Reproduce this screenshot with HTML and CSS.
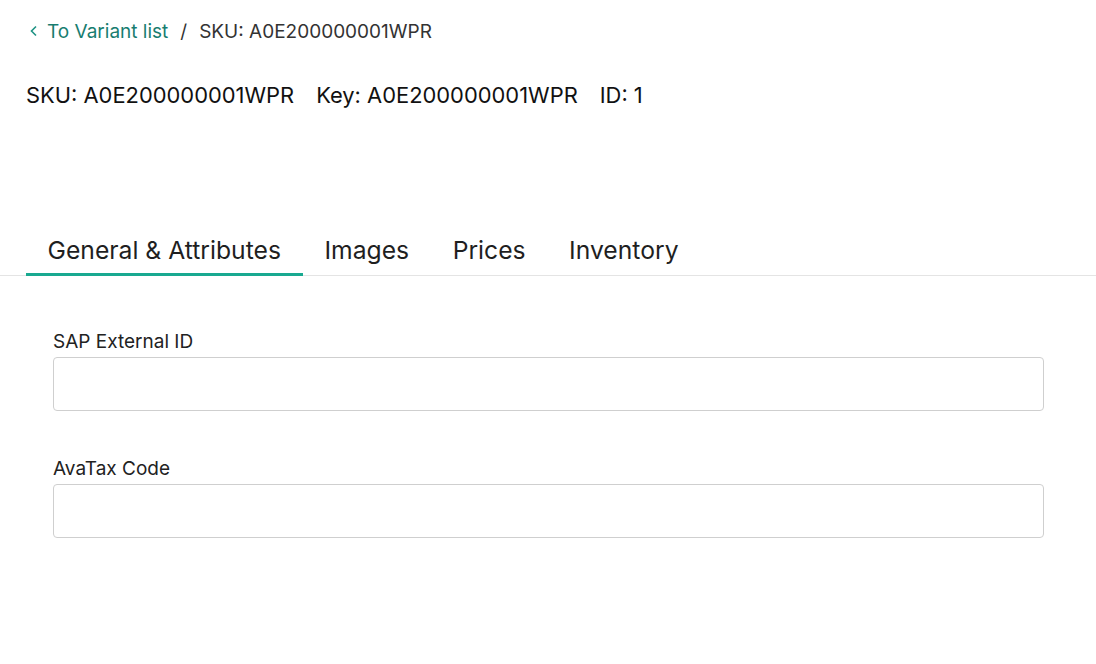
FILE: index.html
```html
<!DOCTYPE html>
<html>
<head>
    <title>Variant</title>
    <link rel="stylesheet" href="styles.css">
</head>
<body>
    <div class="top">
        <nav class="crumbs">
            <a class="back" href="#">
                <svg width="10" height="12" viewBox="0 0 10 12"><path d="M7 1.5 L2.5 6 L7 10.5" fill="none" stroke="#1f9384" stroke-width="1.6"/></svg>
                To Variant list
            </a>
            <span class="sep">/</span>
            <span class="current">SKU: A0E200000001WPR</span>
        </nav>
        <h1 class="title">
            <span>SKU: A0E200000001WPR</span>
            <span>Key: A0E200000001WPR</span>
            <span>ID: 1</span>
        </h1>
    </div>
    <ul class="tabs">
        <li class="tab active">General &amp; Attributes</li>
        <li class="tab">Images</li>
        <li class="tab">Prices</li>
        <li class="tab">Inventory</li>
    </ul>
    <form class="fields">
        <label class="field">
            <span class="label">SAP External ID</span>
            <input type="text">
        </label>
        <label class="field">
            <span class="label">AvaTax Code</span>
            <input type="text">
        </label>
    </form>
</body>
</html>
```

FILE: styles.css
```css
body {
    margin: 0;
    font-family: Inter, "Noto Sans", sans-serif;
    color: #1f1f1f;
    background: #fff;
}
.top {
    padding: 19px 26px 0;
    height: 208px;
    box-sizing: border-box;
}
.crumbs {
    display: flex;
    align-items: center;
    font-size: 19px;
    height: 24px;
}
.back {
    display: flex;
    align-items: center;
    gap: 8px;
    color: #187d70;
    text-decoration: none;
    padding-left: 3px;
}
.sep {
    margin: 0 12px;
    color: #333;
}
.current {
    color: #333;
}
.title {
    display: flex;
    gap: 22px;
    margin: 39px 0 0;
    font-size: 21.9px;
    font-weight: 400;
    color: #111;
}
.tabs {
    list-style: none;
    margin: 0;
    padding: 0 0 0 26px;
    display: flex;
    border-bottom: 1px solid #e4e4e4;
}
.tab {
    font-size: 24.7px;
    line-height: 30px;
    padding: 27px 22px 8px 21.5px;
    color: #1f1f1f;
    border-bottom: 3px solid transparent;
    margin-bottom: -1px;
}
.tab.active {
    border-bottom-color: #18a990;
}
.fields {
    padding: 54px 52px 0 53px;
    display: flex;
    flex-direction: column;
    gap: 46px;
}
.field {
    display: flex;
    flex-direction: column;
    gap: 4px;
}
.label {
    font-size: 19px;
    line-height: 23px;
    color: #222;
}
.field input {
    height: 54px;
    box-sizing: border-box;
    border: 1px solid #cfcfcf;
    border-radius: 4px;
    font-size: 16px;
    padding: 0 12px;
}
```
